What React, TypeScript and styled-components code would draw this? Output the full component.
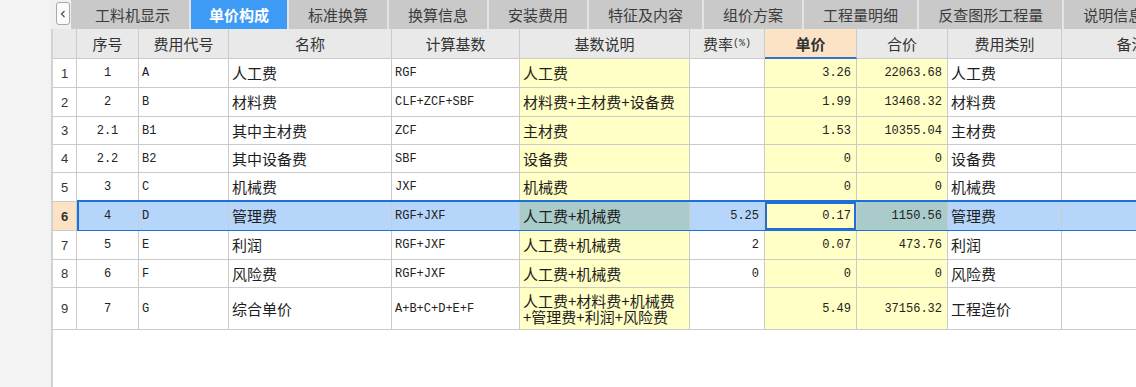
import styled, { createGlobalStyle, css } from "styled-components";

const GlobalStyle = createGlobalStyle`
	html, body {
		margin: 0;
		padding: 0;
		height: 100%;
		overflow: hidden;
		background: #f3f3f3;
	}
	body {
		font-family: "Noto Sans CJK SC", "Liberation Sans", sans-serif;
		color: #222;
	}
`;

const COLS = [24, 62, 90, 163, 128, 170, 75, 92, 91, 114, 140];
const template = COLS.map((c) => c + "px").join(" ");

const YELLOW = "#ffffc6";
const SEL = "#b6d5fa";
const SEL_YELLOW = "#a9cccb";
const PEACH = "#fde3c6";
const BLUE = "#1f6fd8";
const LINE = "#cbcbcb";

const Page = styled.div`
	display: flex;
	height: 100vh;
	width: 1136px;
`;

const Side = styled.div`
	width: 51px;
	flex-shrink: 0;
	background: #f3f3f3;
`;

const Main = styled.div`
	flex: 1;
	min-width: 0;
	display: flex;
	flex-direction: column;
	overflow: hidden;
`;

const TabBar = styled.div`
	display: flex;
	height: 29px;
	background: #f0f0f0;
`;

const ArrowBox = styled.div`
	margin: 2px 0 4px 5px;
	width: 12px;
	border: 1px solid #a9a9a9;
	border-radius: 3px;
	background: #fbfbfb;
	display: flex;
	align-items: center;
	justify-content: center;
	flex-shrink: 0;
`;

const Tabs = styled.div`
	flex: 1;
	display: flex;
	background: #c9c9c9;
	padding-left: 5px;
	overflow: hidden;
	margin-left: 1px;
`;

const Tab = styled.div<{ $active?: boolean }>`
	flex-shrink: 0;
	padding: 0 19px;
	font-size: 15px;
	line-height: 29px;
	color: #3c3c3c;
	white-space: nowrap;
	border-right: 2px solid #e4e4e4;
	${(p) =>
		p.$active &&
		css`
			background: #3d9bf5;
			color: #fff;
			font-weight: 700;
			padding: 0 18px;
		`}
`;

const Body = styled.div`
	flex: 1;
	background: #fff;
	border-left: 2px solid #d2d2d2;
`;

const Row = styled.div<{ $h: number; $selected?: boolean }>`
	display: grid;
	grid-template-columns: ${template};
	height: ${(p) => p.$h}px;
	position: relative;
	${(p) =>
		p.$selected &&
		css`
			&::after {
				content: "";
				position: absolute;
				left: 24px;
				right: -40px;
				top: -2px;
				bottom: -1px;
				border: 2px solid ${BLUE};
				pointer-events: none;
			}
		`}
`;

const HeadCell = styled.div<{ $hot?: boolean }>`
	display: flex;
	align-items: center;
	justify-content: center;
	background: ${(p) => (p.$hot ? PEACH : "#e9e9e9")};
	border-right: 1px solid ${LINE};
	border-bottom: ${(p) => (p.$hot ? `2px solid #2f72d2` : `1px solid ${LINE}`)};
	font-size: 15px;
	font-weight: ${(p) => (p.$hot ? 700 : 400)};
	color: #333;
	white-space: nowrap;
	overflow: hidden;
	small {
		font-family: "Liberation Mono", monospace;
		font-size: 10px;
	}
`;

const Cell = styled.div<{
	$align?: "left" | "center" | "right";
	$bg: string;
	$mono?: boolean;
	$focus?: boolean;
}>`
	display: flex;
	align-items: center;
	justify-content: ${(p) =>
		p.$align === "right" ? "flex-end" : p.$align === "center" ? "center" : "flex-start"};
	padding: 0 ${(p) => (p.$align === "right" ? "5px" : "0")} 0 ${(p) => (p.$align === "left" ? "3px" : "0")};
	background: ${(p) => p.$bg};
	border-right: 1px solid ${LINE};
	border-bottom: 1px solid ${LINE};
	font-size: ${(p) => (p.$mono ? "12px" : "15px")};
	font-family: ${(p) =>
		p.$mono ? `"Liberation Mono", monospace` : `"Noto Sans CJK SC", sans-serif`};
	color: ${(p) => (p.$mono ? "#222" : "#1e1e1e")};
	white-space: pre-line;
	line-height: 16px;
	overflow: hidden;
	${(p) =>
		p.$focus &&
		css`
			box-shadow: inset 0 0 0 2px ${BLUE};
		`}
`;

const NumCell = styled.div<{ $selected?: boolean }>`
	display: flex;
	align-items: center;
	justify-content: center;
	background: ${(p) => (p.$selected ? PEACH : "#fff")};
	border-right: 1px solid ${LINE};
	border-bottom: 1px solid ${LINE};
	font-family: "Liberation Sans", sans-serif;
	font-size: 13px;
	font-weight: ${(p) => (p.$selected ? 700 : 400)};
	color: #333;
`;

const tabs = [
	"工料机显示",
	"单价构成",
	"标准换算",
	"换算信息",
	"安装费用",
	"特征及内容",
	"组价方案",
	"工程量明细",
	"反查图形工程量",
	"说明信息",
];

type Item = {
	seq: string;
	code: string;
	name: string;
	base: string;
	desc: string;
	rate: string;
	price: string;
	total: string;
	cat: string;
	h: number;
	selected?: boolean;
};

const rows: Item[] = [
	{ seq: "1", code: "A", name: "人工费", base: "RGF", desc: "人工费", rate: "", price: "3.26", total: "22063.68", cat: "人工费", h: 29 },
	{ seq: "2", code: "B", name: "材料费", base: "CLF+ZCF+SBF", desc: "材料费+主材费+设备费", rate: "", price: "1.99", total: "13468.32", cat: "材料费", h: 29 },
	{ seq: "2.1", code: "B1", name: "其中主材费", base: "ZCF", desc: "主材费", rate: "", price: "1.53", total: "10355.04", cat: "主材费", h: 28 },
	{ seq: "2.2", code: "B2", name: "其中设备费", base: "SBF", desc: "设备费", rate: "", price: "0", total: "0", cat: "设备费", h: 28 },
	{ seq: "3", code: "C", name: "机械费", base: "JXF", desc: "机械费", rate: "", price: "0", total: "0", cat: "机械费", h: 29 },
	{ seq: "4", code: "D", name: "管理费", base: "RGF+JXF", desc: "人工费+机械费", rate: "5.25", price: "0.17", total: "1150.56", cat: "管理费", h: 29, selected: true },
	{ seq: "5", code: "E", name: "利润", base: "RGF+JXF", desc: "人工费+机械费", rate: "2", price: "0.07", total: "473.76", cat: "利润", h: 29 },
	{ seq: "6", code: "F", name: "风险费", base: "RGF+JXF", desc: "人工费+机械费", rate: "0", price: "0", total: "0", cat: "风险费", h: 28 },
	{ seq: "7", code: "G", name: "综合单价", base: "A+B+C+D+E+F", desc: "人工费+材料费+机械费\n+管理费+利润+风险费", rate: "", price: "5.49", total: "37156.32", cat: "工程造价", h: 42 },
];

function bg(yellow: boolean, selected?: boolean) {
	if (selected) return yellow ? SEL_YELLOW : SEL;
	return yellow ? YELLOW : "#fff";
}

function ChevronLeft() {
	return (
		<svg width="8" height="10" viewBox="0 0 8 10">
			<path d="M5.5 2 L2.5 5 L5.5 8" fill="none" stroke="#555" strokeWidth="1.3" />
		</svg>
	);
}

export default function App() {
	return (
		<>
			<GlobalStyle />
			<Page>
				<Side />
				<Main>
					<TabBar>
						<ArrowBox>
							<ChevronLeft />
						</ArrowBox>
						<Tabs>
							{tabs.map((t) => (
								<Tab key={t} $active={t === "单价构成"}>
									{t}
								</Tab>
							))}
						</Tabs>
					</TabBar>
					<Body>
						<Row $h={30}>
							<HeadCell />
							<HeadCell>序号</HeadCell>
							<HeadCell>费用代号</HeadCell>
							<HeadCell>名称</HeadCell>
							<HeadCell>计算基数</HeadCell>
							<HeadCell>基数说明</HeadCell>
							<HeadCell>
								费率<small>(%)</small>
							</HeadCell>
							<HeadCell $hot>单价</HeadCell>
							<HeadCell>合价</HeadCell>
							<HeadCell>费用类别</HeadCell>
							<HeadCell>备注</HeadCell>
						</Row>
						{rows.map((r, i) => (
							<Row key={i} $h={r.h} $selected={r.selected}>
								<NumCell $selected={r.selected}>{i + 1}</NumCell>
								<Cell $align="center" $mono $bg={bg(false, r.selected)}>
									{r.seq}
								</Cell>
								<Cell $align="left" $mono $bg={bg(false, r.selected)}>
									{r.code}
								</Cell>
								<Cell $align="left" $bg={bg(false, r.selected)}>
									{r.name}
								</Cell>
								<Cell $align="left" $mono $bg={bg(false, r.selected)}>
									{r.base}
								</Cell>
								<Cell $align="left" $bg={bg(true, r.selected)}>
									{r.desc}
								</Cell>
								<Cell $align="right" $mono $bg={bg(false, r.selected)}>
									{r.rate}
								</Cell>
								<Cell $align="right" $mono $bg={YELLOW} $focus={r.selected}>
									{r.price}
								</Cell>
								<Cell $align="right" $mono $bg={bg(true, r.selected)}>
									{r.total}
								</Cell>
								<Cell $align="left" $bg={bg(false, r.selected)}>
									{r.cat}
								</Cell>
								<Cell $bg={bg(false, r.selected)} />
							</Row>
						))}
					</Body>
				</Main>
			</Page>
		</>
	);
}
